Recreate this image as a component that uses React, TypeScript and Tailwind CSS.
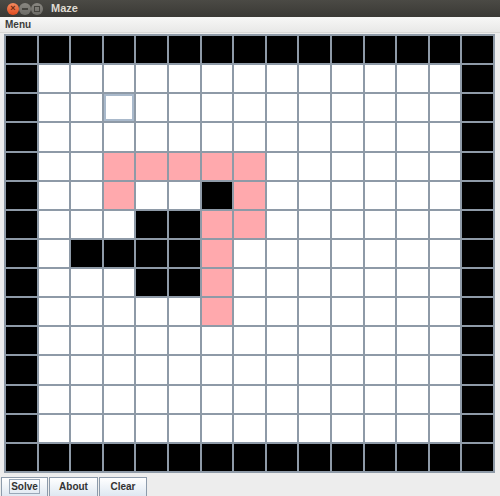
const WALLS = new Set(['5-6', '6-4', '6-5', '7-2', '7-3', '7-4', '7-5', '8-4', '8-5'])
const PATH = new Set(['4-3', '4-4', '4-5', '4-6', '4-7', '5-3', '5-7', '6-6', '6-7', '7-6', '8-6', '9-6'])
const SELECTED = '2-3'
const SIZE = 15

function cellClass(r: number, c: number) {
  const key = `${r}-${c}`
  if (r === 0 || c === 0 || r === SIZE - 1 || c === SIZE - 1 || WALLS.has(key)) return 'bg-black'
  if (PATH.has(key)) return 'bg-[#ffa9ad]'
  if (key === SELECTED) return 'bg-white ring-2 ring-inset ring-[#a9b9cb]'
  return 'bg-white'
}

function TitleBar() {
  return (
    <div className="flex h-[17px] shrink-0 items-center bg-gradient-to-b from-[#4b4a45] to-[#3a3935] pl-[7px]">
      <div className="flex items-center gap-[0px]">
        <span className="flex h-[12px] w-[12px] items-center justify-center rounded-full bg-gradient-to-b from-[#f58a5e] to-[#df4a1c] text-[9px] leading-none font-bold text-[#6a2a12]">
          ×
        </span>
        <span className="flex h-[12px] w-[12px] items-center justify-center rounded-full bg-gradient-to-b from-[#8a8882] to-[#6c6b66]">
          <span className="h-[2px] w-[6px] bg-[#45443f]" />
        </span>
        <span className="flex h-[12px] w-[12px] items-center justify-center rounded-full bg-gradient-to-b from-[#8a8882] to-[#6c6b66]">
          <span className="h-[6px] w-[6px] border border-[#45443f]" />
        </span>
      </div>
      <span
        className="ml-[8px] text-[11px] leading-none font-bold text-[#dfdbd2]"
        style={{ fontFamily: '"Liberation Sans", Arial, sans-serif' }}
      >
        Maze
      </span>
    </div>
  )
}

export default function App() {
  return (
    <div
      className="flex h-[496px] w-[500px] flex-col overflow-hidden bg-[#ededed]"
      style={{ fontFamily: '"Liberation Sans", Arial, sans-serif' }}
    >
      <TitleBar />
      <div className="flex h-[16px] shrink-0 items-center border-b border-[#d8d8d6] bg-gradient-to-b from-[#f7f7f6] to-[#e8e8e7] pl-[5px]">
        <span className="text-[10px] leading-none font-bold text-[#3c3c3c]">Menu</span>
      </div>
      <div className="shrink-0 pt-[1px] pl-[4px]">
        <div className="grid h-[439px] w-[491px] grid-cols-[repeat(15,minmax(0,1fr))] grid-rows-[repeat(15,minmax(0,1fr))] gap-[2px] bg-[#8e9aa7] p-[2px]">
          {Array.from({ length: SIZE * SIZE }, (_, i) => {
            const r = Math.floor(i / SIZE)
            const c = i % SIZE
            return <div key={i} className={cellClass(r, c)} />
          })}
        </div>
      </div>
      <div className="mt-[4px] flex shrink-0 pl-[1px]">
        {['Solve', 'About', 'Clear'].map((label, i) => (
          <button
            key={label}
            className={`flex h-[22px] items-center justify-center border border-[#8d9bab] bg-gradient-to-b from-[#ffffff] to-[#dbe5f0] pb-[3px] text-[10px] font-bold text-[#333] ${
              i === 0 ? 'w-[47px]' : i === 1 ? 'ml-[1px] w-[49px]' : 'ml-[1px] w-[48px]'
            }`}
          >
            <span className={i === 0 ? 'border border-[#9aa8b8] px-[1px] leading-[13px]' : 'leading-[13px]'}>{label}</span>
          </button>
        ))}
      </div>
    </div>
  )
}
